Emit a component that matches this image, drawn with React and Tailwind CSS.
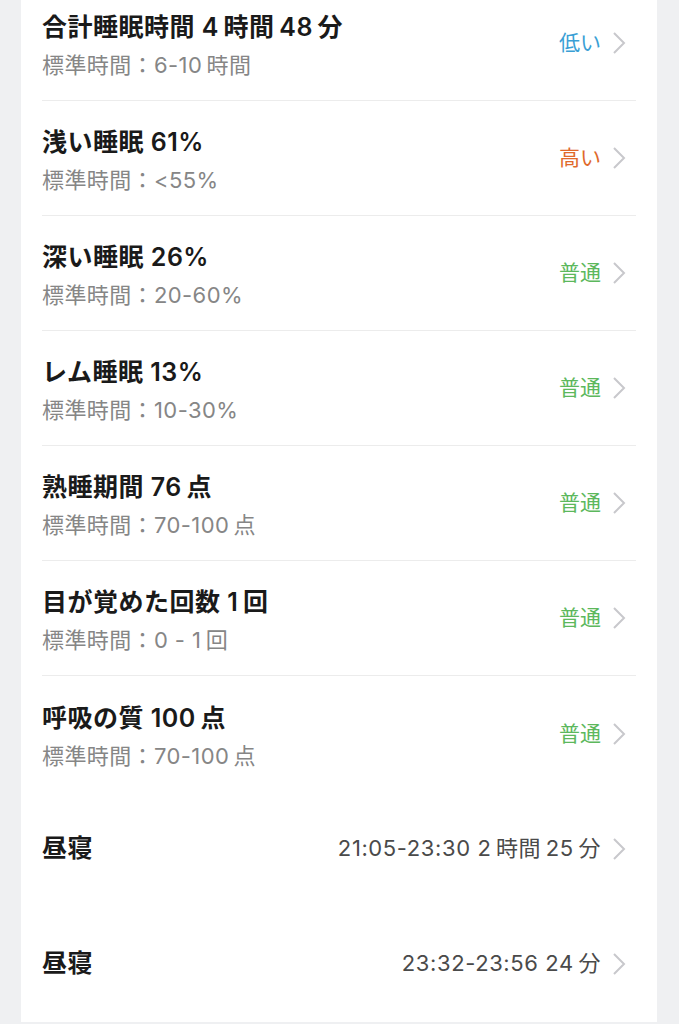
const T='\u2009';
const ROWS=[
  {t:`合計睡眠時間 4${T}時間${T}48${T}分`,s:`標準時間：6-10${T}時間`,st:'低い',c:'text-[#3a9fd5]'},
  {t:'浅い睡眠 61%',s:'標準時間：<55%',st:'高い',c:'text-[#e0692a]'},
  {t:'深い睡眠 26%',s:'標準時間：20-60%',st:'普通',c:'text-[#5cb85c]'},
  {t:'レム睡眠 13%',s:'標準時間：10-30%',st:'普通',c:'text-[#5cb85c]'},
  {t:`熟睡期間 76${T}点`,s:`標準時間：70-100${T}点`,st:'普通',c:'text-[#5cb85c]'},
  {t:`目が覚めた回数 1${T}回`,s:`標準時間：0 - 1${T}回`,st:'普通',c:'text-[#5cb85c]'},
  {t:`呼吸の質 100${T}点`,s:`標準時間：70-100${T}点`,st:'普通',c:'text-[#5cb85c]'},
];
const NAPS=[`21:05-23:30 2${T}時間${T}25${T}分`,`23:32-23:56 24${T}分`];

function Chevron(){
  return(<svg width="14" height="24" viewBox="0 0 14 24" className="ml-[11px] mr-[10px] shrink-0">
    <path d="M2 2 L12 12 L2 22" fill="none" stroke="#c8c8cc" strokeWidth="2"/></svg>);
}

export default function App(){
  return(
    <div className="w-[679px] h-[1024px] overflow-hidden bg-[#eff0f2] pl-[21px] pr-[22px]" style={{fontFamily:'Inter,"Noto Sans CJK JP","Noto Sans",sans-serif'}}>
      <div className="bg-white -mt-[14px] px-[21px] pb-[1px]">
        {ROWS.map((r,i)=>(
          <div key={i} className={`h-[115px] flex items-center ${i<ROWS.length-1?'border-b border-[#ececec]':''}`}>
            <div className="flex-1 flex flex-col gap-[9px] pt-[5px]">
              <p className="text-[25px] leading-[30px] font-semibold tracking-[0.5px] text-[#1a1a1a]">{r.t}</p>
              <p className="text-[22px] leading-[28px] tracking-[0.4px] text-[#868686]">{r.s}</p>
            </div>
            <span className={`text-[21px] ${r.c}`}>{r.st}</span>
            <Chevron/>
          </div>
        ))}
        {NAPS.map((n,i)=>(
          <div key={i} className="h-[115px] flex items-center">
            <p className="flex-1 text-[25px] font-semibold tracking-[0.5px] text-[#1a1a1a]">昼寝</p>
            <span className="text-[22px] tracking-[0.6px] text-[#4a4a4a]">{n}</span>
            <Chevron/>
          </div>
        ))}
      </div>
    </div>
  );
}
